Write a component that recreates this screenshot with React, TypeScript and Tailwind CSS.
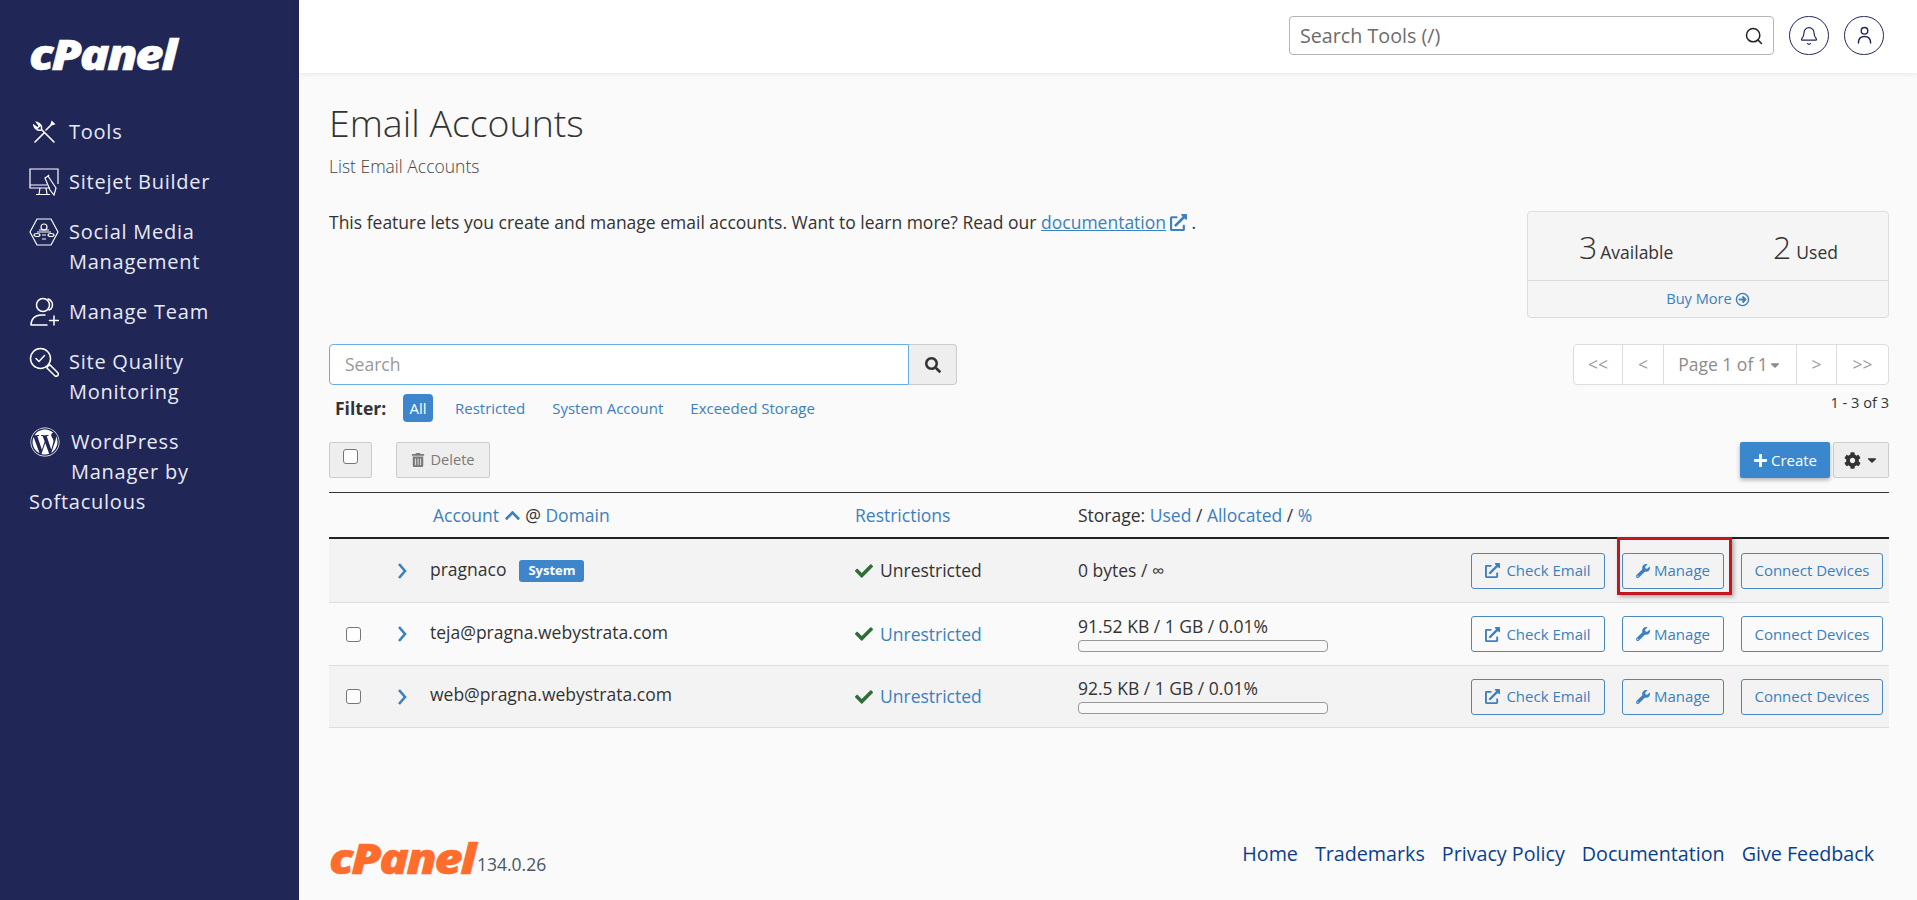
import { Bell, Search } from "lucide-react";
import {
  FaCaretDown,
  FaCheck,
  FaChevronUp,
  FaCog,
  FaExternalLinkAlt,
  FaPlus,
  FaSearch,
  FaTrashAlt,
  FaWordpress,
  FaWrench,
} from "react-icons/fa";

function ToolsIcon() {
  return (
    <svg viewBox="0 0 24 24" className="w-[24px] h-[24px]" fill="none" stroke="currentColor" strokeWidth="1.6" strokeLinecap="round">
      <path d="M3 22l9-9M14 10l5-5 1-3 2 2-3 1" />
      <path d="M22 22L9.5 9.5c.8-2.500-.8-6-4.500-7l2.500 3.500-2 2L2 5.500c.7 3.500 4 5.500 7 4.500" />
    </svg>
  );
}

function SitejetIcon() {
  return (
    <svg viewBox="0 0 30 30" className="w-[30px] h-[30px]" fill="none" stroke="currentColor" strokeWidth="1.2">
      <path d="M29 17V2H1v19h20M1 18h17M11 21l-1 6M17 21l1 6M7 27.500h14" />
      <path d="M16 11l3-2 8 12-2 7-4-5z" />
      <path d="M19 9l1-1" />
    </svg>
  );
}

function SocialIcon() {
  return (
    <svg viewBox="0 0 30 28" className="w-[30px] h-[28px]" fill="none" stroke="currentColor" strokeWidth="1.2">
      <path d="M8 1h14l7 13-7 13H8L1 14z" />
      <circle cx="15" cy="9" r="3" />
      <path d="M8 14h14M10 12h10" />
      <ellipse cx="8" cy="17" rx="3" ry="1.500" />
      <ellipse cx="22" cy="17" rx="3" ry="1.500" />
      <path d="M13 17h4M13 21h4" />
    </svg>
  );
}

function TeamIcon() {
  return (
    <svg viewBox="0 0 30 30" className="w-[30px] h-[30px]" fill="none" stroke="currentColor" strokeWidth="1.500" strokeLinecap="round">
      <circle cx="14" cy="8" r="6.500" />
      <path d="M19 2c4 1 6 6 3 10l-2 1M2 28c0-6 4-10 10-10h4M2 28h16M25 19v9M20.500 23.500h9" />
    </svg>
  );
}

function QualityIcon() {
  return (
    <svg viewBox="0 0 30 30" className="w-[30px] h-[30px]" fill="none" stroke="currentColor" strokeWidth="1.500" strokeLinecap="round">
      <circle cx="11.500" cy="11.500" r="10" />
      <path d="M7 11.500l3 3 5.500-6" />
      <path d="M19 19l2-1 8 8c1 2-1 4-3 3l-8-8z" />
    </svg>
  );
}

function UserIcon() {
  return (
    <svg viewBox="0 0 16 20" className="w-[15px] h-[19px]" fill="none" stroke="currentColor" strokeWidth="1.500" strokeLinecap="round">
      <circle cx="8" cy="5" r="3.500" />
      <path d="M1.500 18c0-5 2.500-7 6.500-7s6.500 2 6.500 7" />
    </svg>
  );
}

function CircleArrow() {
  return (
    <svg viewBox="0 0 16 16" className="inline-block w-[15px] h-[15px] ml-[3px] align-[-2px]" fill="none" stroke="currentColor">
      <circle cx="8" cy="8" r="6.500" strokeWidth="1.500" />
      <path d="M4 8h7M8 4.800L11.200 8 8 11.200" strokeWidth="2" />
    </svg>
  );
}

function Chevron() {
  return (
    <svg viewBox="0 0 10 16" className="w-[10px] h-[16px] text-[#3b80c0]" fill="none" stroke="currentColor" strokeWidth="2.600">
      <path d="M2 1l6 7-6 7" />
    </svg>
  );
}

function NavItem({ icon, lines }: { icon: React.ReactNode; lines: string[] }) {
  return (
    <a href="#" className="flex items-start gap-[10px] text-[20px] leading-[30px] tracking-[0.75px] text-[#e8eaf5]">
      <span className="w-[30px] h-[30px] flex items-center justify-center shrink-0 text-white">{icon}</span>
      <span>
        {lines.map((l) => (
          <span key={l} className="block">{l}</span>
        ))}
      </span>
    </a>
  );
}

function RowButtons({ marked }: { marked?: boolean }) {
  const btn = "h-[36px] flex items-center justify-center rounded-[3px] border border-[#4a87bd] text-[15px] text-[#3b80c0] bg-transparent";
  return (
    <div className="flex items-center pr-[6px]">
      <a href="#" className={btn + " w-[134px] gap-[6px]"}>
        <FaExternalLinkAlt className="text-[15px]" /> Check Email
      </a>
      <div className="relative ml-[17px]">
        <a href="#" className={btn + " w-[102px] gap-[4px]"}>
          <FaWrench className="text-[14px]" /> Manage
        </a>
        {marked && (
          <div className="absolute -left-[5px] -right-[8px] -top-[16px] -bottom-[6px] border-[3px] border-[#c4161c] shadow-[2px_2px_4px_rgba(0,0,0,0.3)]" />
        )}
      </div>
      <a href="#" className={btn + " w-[142px] ml-[17px]"}>
        Connect Devices
      </a>
    </div>
  );
}

function Row({
  name,
  badge,
  checkbox,
  link,
  usage,
  bar,
  marked,
  bg,
  height,
}: {
  name: string;
  badge?: boolean;
  checkbox?: boolean;
  link?: boolean;
  usage: string;
  bar?: boolean;
  marked?: boolean;
  bg: string;
  height: string;
}) {
  return (
    <div className={"grid grid-cols-[65px_461px_223px_1fr_auto] items-center border-b border-[#dddddd] text-[17.5px] text-[#333333] " + bg + " " + height}>
      <div className="flex justify-end pr-[33px]">
        {checkbox && <span className="w-[15px] h-[15px] rounded-[3px] border border-[#767676] bg-white" />}
      </div>
      <div className="flex items-center pl-[3px]">
        <Chevron />
        <span className={"ml-[23px] " + (checkbox ? "-mt-[4px]" : "-mt-[2px]")}>{name}</span>
        {badge && (
          <span className="ml-[13px] h-[22px] w-[65px] flex items-center justify-center rounded-[3px] bg-[#3d86cc] text-white text-[13px] font-bold">System</span>
        )}
      </div>
      <div className="flex items-center gap-[7px]">
        <FaCheck className="text-[#2f6f37] text-[18px]" />
        <span className={link ? "text-[#3b80c0]" : ""}>Unrestricted</span>
      </div>
      <div className="-mt-[1px]">
        <div className="leading-[20px]">{usage}</div>
        {bar && <div className="w-[250px] h-[12px] mt-[4px] rounded-[4px] border border-[#999999] bg-[#f8f8f8]" />}
      </div>
      <RowButtons marked={marked} />
    </div>
  );
}

export default function App() {
  return (
    <div className="flex min-h-screen h-[900px] overflow-hidden font-['Open_Sans',sans-serif] bg-[#fafafa] text-[#333333]">
      <aside className="w-[299px] shrink-0 bg-[#202656] px-[29px] pt-[28px]">
        <div className="h-[50px] flex items-center">
          <span className="inline-block origin-left scale-x-[1.14] text-[43px] leading-none font-extrabold italic tracking-[-2px] text-white [-webkit-text-stroke:0.5px_white]">cPanel</span>
        </div>
        <nav className="mt-[39px] flex flex-col gap-[20px]">
          <NavItem icon={<ToolsIcon />} lines={["Tools"]} />
          <NavItem icon={<SitejetIcon />} lines={["Sitejet Builder"]} />
          <NavItem icon={<SocialIcon />} lines={["Social Media", "Management"]} />
          <NavItem icon={<TeamIcon />} lines={["Manage Team"]} />
          <NavItem icon={<QualityIcon />} lines={["Site Quality", "Monitoring"]} />
          <a href="#" className="block text-[20px] leading-[30px] tracking-[0.75px] text-[#e8eaf5]">
            <span className="float-left w-[42px] h-[60px] pl-[1px] text-white">
              <FaWordpress className="text-[30px]" />
            </span>
            WordPress Manager by Softaculous
          </a>
        </nav>
      </aside>

      <div className="flex-1 flex flex-col min-w-0">
        <header className="h-[73px] shrink-0 bg-white shadow-[0_1px_6px_rgba(0,0,0,0.08)] flex items-start justify-end pt-[16px] pr-[33px] gap-[15px]">
          <div className="w-[485px] h-[39px] rounded-[4px] border border-[#b5b5b5] bg-white flex items-center justify-between pl-[10px] pr-[9px]">
            <span className="text-[19.7px] text-[#6c6c6c]">Search Tools (/)</span>
            <Search size={20} strokeWidth={1.8} className="text-[#222222]" />
          </div>
          <div className="w-[40px] h-[39px] rounded-full border border-[#202656] flex items-center justify-center text-[#202656]">
            <Bell size={20} strokeWidth={1.4} />
          </div>
          <div className="w-[40px] h-[39px] rounded-full border border-[#202656] flex items-center justify-center text-[#202656]">
            <UserIcon />
          </div>
        </header>

        <main className="flex-1 pl-[30px] pr-[28px] flex flex-col">
          <h1 className="mt-[25px] text-[37.5px] leading-[50px] font-light text-[#333333]">Email Accounts</h1>
          <p className="mt-[6px] text-[17.5px] leading-[24px] font-light text-[#444444]">List Email Accounts</p>

          <div className="flex justify-between items-start">
            <p className="mt-[32px] text-[17.5px] leading-[24px]">
              This feature lets you create and manage email accounts. Want to learn more? Read our{" "}
              <a href="#" className="text-[#3b80c0] underline">documentation</a>
              <FaExternalLinkAlt className="inline-block ml-[4px] text-[#3b80c0] text-[17px] align-[-2px]" /> .
            </p>
            <div className="mt-[33px] w-[362px] h-[107px] rounded-[4px] border border-[#dddddd] bg-[#f5f5f5] flex flex-col">
              <div className="flex-1 flex items-center border-b border-[#dddddd] pt-[4px]">
                <div className="flex-1 pl-[51px]">
                  <span className="text-[32px] leading-none font-light">3</span>
                  <span className="ml-[3px] text-[17.5px]">Available</span>
                </div>
                <div className="pr-[50px]">
                  <span className="text-[32px] leading-none font-light">2</span>
                  <span className="ml-[5px] text-[17.5px]">Used</span>
                </div>
              </div>
              <a href="#" className="h-[36px] flex items-center justify-center text-[14.6px] text-[#3b80c0]">
                Buy More
                <CircleArrow />
              </a>
            </div>
          </div>

          <div className="mt-[26px] flex justify-between items-start">
            <div>
              <div className="flex">
                <div className="w-[580px] h-[41px] rounded-l-[4px] border border-[#66afe9] bg-white flex items-center pl-[15px] text-[17.5px] text-[#999999]">
                  Search
                </div>
                <button className="w-[48px] h-[41px] rounded-r-[4px] border border-l-0 border-[#cccccc] bg-[#eeeeee] flex items-center justify-center text-[#333333]">
                  <FaSearch className="text-[16px]" />
                </button>
              </div>
              <div className="mt-[9px] flex items-center text-[15px] pl-[6px]">
                <span className="font-bold text-[17.5px] w-[68px]">Filter:</span>
                <span className="h-[28px] w-[30px] flex items-center justify-center rounded-[4px] bg-[#3d86cc] text-white">All</span>
                <a href="#" className="ml-[22px] text-[#3b80c0]">Restricted</a>
                <a href="#" className="ml-[27px] text-[#3b80c0]">System Account</a>
                <a href="#" className="ml-[27px] text-[#3b80c0]">Exceeded Storage</a>
              </div>
            </div>
            <div className="flex flex-col items-end">
              <div className="flex h-[41px] rounded-[4px] border border-[#dddddd] bg-white text-[#999999] text-[17.5px] divide-x divide-[#dddddd]">
                <span className="w-[49px] flex items-center justify-center">&lt;&lt;</span>
                <span className="w-[41px] flex items-center justify-center">&lt;</span>
                <span className="w-[133px] flex items-center justify-center text-[#8c8c8c]">
                  Page 1 of 1<FaCaretDown className="text-[14px]" />
                </span>
                <span className="w-[40px] flex items-center justify-center">&gt;</span>
                <span className="w-[51px] flex items-center justify-center">&gt;&gt;</span>
              </div>
              <span className="mt-[7px] text-[14.6px]">1 - 3 of 3</span>
            </div>
          </div>

          <div className="mt-[20px] flex items-center h-[36px]">
            <div className="w-[43px] h-[36px] rounded-[2px] border border-[#cccccc] bg-[#eeeeee] flex justify-center pt-[6px]">
              <span className="w-[15px] h-[15px] rounded-[3px] border border-[#767676] bg-white" />
            </div>
            <button className="ml-[24px] w-[94px] h-[36px] rounded-[2px] border border-[#cccccc] bg-[#eeeeee] flex items-center justify-center gap-[5px] text-[14.6px] text-[#7a7a7a]">
              <FaTrashAlt className="text-[14px]" /> Delete
            </button>
            <button className="ml-auto w-[90px] h-[36px] rounded-[2px] bg-[#3a87cd] flex items-center justify-center gap-[3px] text-[15px] text-white shadow-[0_2px_4px_rgba(0,0,0,0.3)]">
              <FaPlus className="text-[15px]" /> Create
            </button>
            <button className="ml-[3px] w-[56px] h-[36px] rounded-[2px] border border-[#cccccc] bg-[#eeeeee] flex items-center justify-center gap-[4px] text-[#333333]">
              <FaCog className="text-[17px]" /> <FaCaretDown className="text-[14px]" />
            </button>
          </div>

          <div className="mt-[14px] border-t border-[#333333]">
            <div className="grid grid-cols-[104px_422px_223px_1fr] items-center h-[46px] border-b-[2px] border-[#222222] text-[17.5px]">
              <div />
              <div className="text-[#3b80c0]">
                Account <FaChevronUp className="inline-block text-[17px] align-[-2px]" />{" "}
                <span className="text-[#333333]">@</span> Domain
              </div>
              <div className="text-[#3b80c0]">Restrictions</div>
              <div>
                Storage: <span className="text-[#3b80c0]">Used</span> / <span className="text-[#3b80c0]">Allocated</span> /{" "}
                <span className="text-[#3b80c0]">%</span>
              </div>
            </div>
            <Row name="pragnaco" badge usage="0 bytes / ∞" marked bg="bg-[#f3f3f3]" height="h-[64px]" />
            <Row name="teja@pragna.webystrata.com" checkbox link usage="91.52 KB / 1 GB / 0.01%" bar bg="bg-[#fafafa]" height="h-[63px]" />
            <Row name="web@pragna.webystrata.com" checkbox link usage="92.5 KB / 1 GB / 0.01%" bar bg="bg-[#f3f3f3]" height="h-[62px]" />
          </div>

          <footer className="mt-auto mb-[20px] flex items-end justify-between pr-[15px]">
            <div className="flex items-end">
              <div className="w-[148px]">
                <span className="inline-block origin-left scale-x-[1.16] text-[42px] leading-[40px] font-extrabold italic tracking-[-2px] text-[#ff6c2c] [-webkit-text-stroke:0.5px_#ff6c2c]">cPanel</span>
              </div>
              <span className="text-[17.5px] leading-[24px] text-[#4a5568] pb-[4px]">134.0.26</span>
            </div>
            <div className="flex gap-[17px] text-[19.7px] leading-[24px] text-[#0a3f8f] pb-[14px]">
              <a href="#">Home</a>
              <a href="#">Trademarks</a>
              <a href="#">Privacy Policy</a>
              <a href="#">Documentation</a>
              <a href="#">Give Feedback</a>
            </div>
          </footer>
        </main>
      </div>
    </div>
  );
}
